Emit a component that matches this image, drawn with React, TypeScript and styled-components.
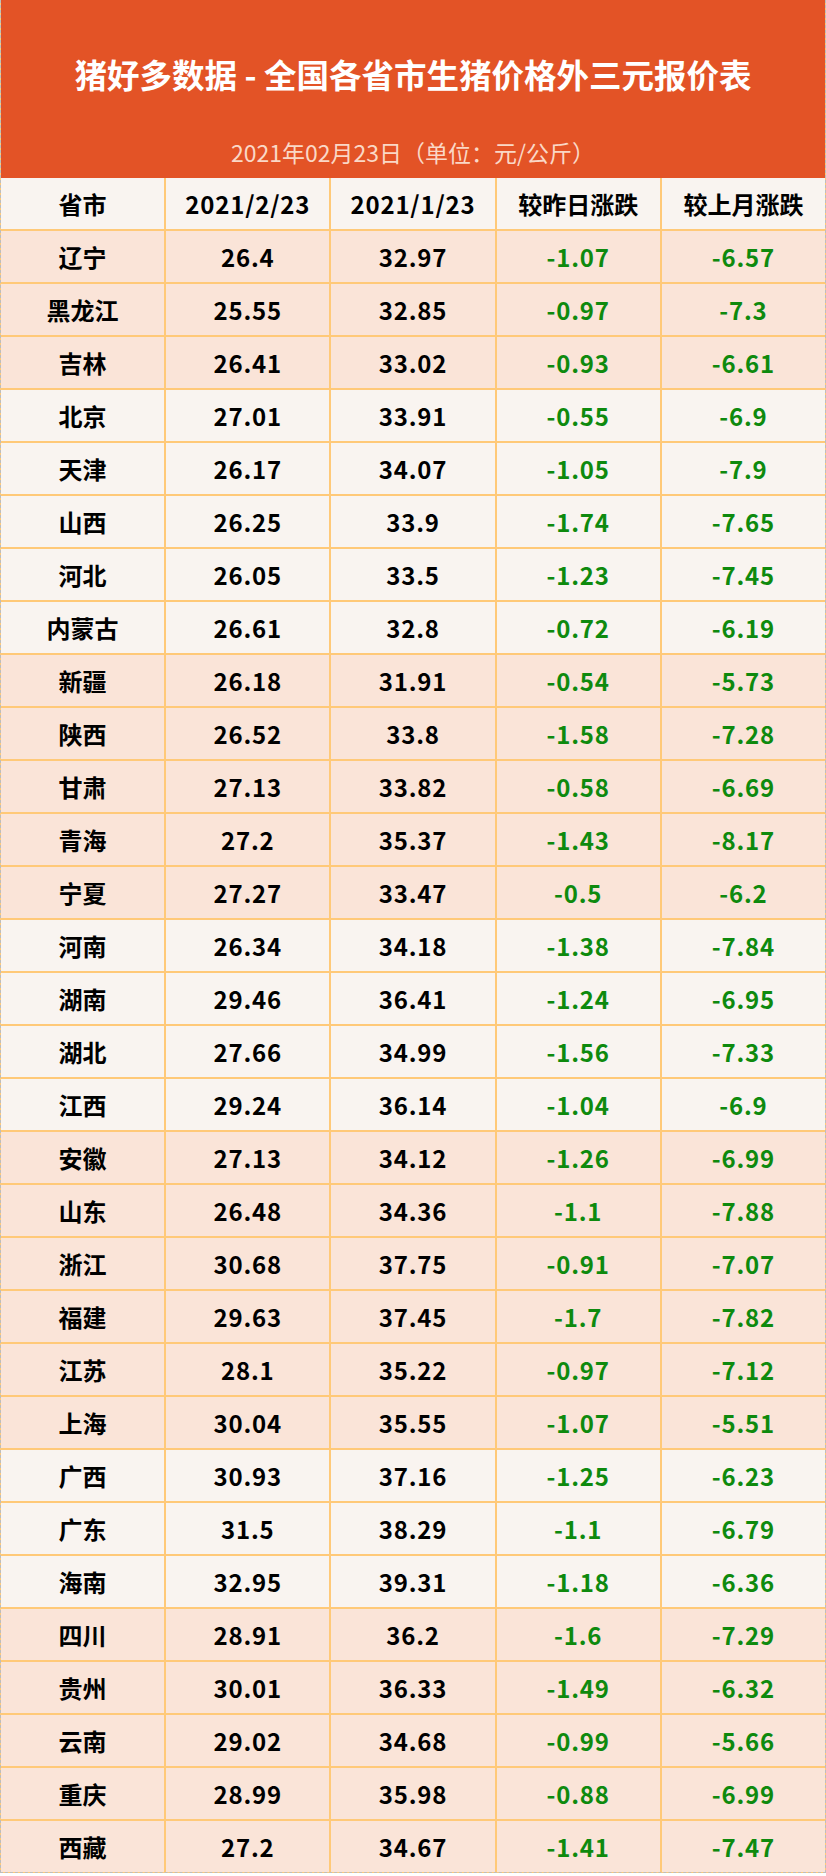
import React from "react";
import styled, { createGlobalStyle } from "styled-components";

const GlobalStyle = createGlobalStyle`
  html, body {
    margin: 0;
    padding: 0;
    background: #ffffff;
  }
  body {
    font-family: "Noto Sans CJK SC", "Noto Sans", sans-serif;
  }
`;

type Row = [string, string, string, string, string, boolean];

// name, 2021/2/23, 2021/1/23, day change, month change, pink row
const rows: Row[] = [
  ["辽宁", "26.4", "32.97", "-1.07", "-6.57", true],
  ["黑龙江", "25.55", "32.85", "-0.97", "-7.3", true],
  ["吉林", "26.41", "33.02", "-0.93", "-6.61", true],
  ["北京", "27.01", "33.91", "-0.55", "-6.9", false],
  ["天津", "26.17", "34.07", "-1.05", "-7.9", false],
  ["山西", "26.25", "33.9", "-1.74", "-7.65", false],
  ["河北", "26.05", "33.5", "-1.23", "-7.45", false],
  ["内蒙古", "26.61", "32.8", "-0.72", "-6.19", false],
  ["新疆", "26.18", "31.91", "-0.54", "-5.73", true],
  ["陕西", "26.52", "33.8", "-1.58", "-7.28", true],
  ["甘肃", "27.13", "33.82", "-0.58", "-6.69", true],
  ["青海", "27.2", "35.37", "-1.43", "-8.17", true],
  ["宁夏", "27.27", "33.47", "-0.5", "-6.2", true],
  ["河南", "26.34", "34.18", "-1.38", "-7.84", false],
  ["湖南", "29.46", "36.41", "-1.24", "-6.95", false],
  ["湖北", "27.66", "34.99", "-1.56", "-7.33", false],
  ["江西", "29.24", "36.14", "-1.04", "-6.9", false],
  ["安徽", "27.13", "34.12", "-1.26", "-6.99", true],
  ["山东", "26.48", "34.36", "-1.1", "-7.88", true],
  ["浙江", "30.68", "37.75", "-0.91", "-7.07", true],
  ["福建", "29.63", "37.45", "-1.7", "-7.82", true],
  ["江苏", "28.1", "35.22", "-0.97", "-7.12", true],
  ["上海", "30.04", "35.55", "-1.07", "-5.51", true],
  ["广西", "30.93", "37.16", "-1.25", "-6.23", false],
  ["广东", "31.5", "38.29", "-1.1", "-6.79", false],
  ["海南", "32.95", "39.31", "-1.18", "-6.36", false],
  ["四川", "28.91", "36.2", "-1.6", "-7.29", true],
  ["贵州", "30.01", "36.33", "-1.49", "-6.32", true],
  ["云南", "29.02", "34.68", "-0.99", "-5.66", true],
  ["重庆", "28.99", "35.98", "-0.88", "-6.99", true],
  ["西藏", "27.2", "34.67", "-1.41", "-7.47", true],
];

const Page = styled.div`
  width: 826px;
  box-sizing: border-box;
  border: 1px dashed #bdbdbd;
  border-top: none;
  background: #ffc978;
`;

const Banner = styled.header`
  height: 178px;
  background: #e35326;
  display: flex;
  flex-direction: column;
  align-items: center;
  padding-top: 55px;
  box-sizing: border-box;
`;

const Title = styled.h1`
  margin: 0;
  font-size: 32.5px;
  line-height: 38px;
  font-weight: 700;
  color: #ffffff;
`;

const Subtitle = styled.div`
  margin-top: 46px;
  font-size: 23px;
  line-height: 26px;
  font-weight: 400;
  color: #fad8c6;
`;

const Grid = styled.div`
  display: grid;
  grid-template-columns: repeat(5, 1fr);
  column-gap: 2px;
  row-gap: 2px;
`;

const Cell = styled.div<{ $pink?: boolean; $num?: boolean; $green?: boolean }>`
  height: 51px;
  display: flex;
  align-items: center;
  justify-content: center;
  background: ${(p) => (p.$pink ? "#fae4d8" : "#f9f4f0")};
  color: ${(p) => (p.$green ? "#0e8a0e" : "#000000")};
  font-size: 24px;
  font-weight: 700;
  letter-spacing: ${(p) => (p.$num ? "0.8px" : "0")};
`;

const App: React.FC = () => {
  return (
    <Page>
      <GlobalStyle />
      <Banner>
        <Title>猪好多数据 - 全国各省市生猪价格外三元报价表</Title>
        <Subtitle>2021年02月23日（单位：元/公斤）</Subtitle>
      </Banner>
      <Grid>
        <Cell>省市</Cell>
        <Cell $num>2021/2/23</Cell>
        <Cell $num>2021/1/23</Cell>
        <Cell>较昨日涨跌</Cell>
        <Cell>较上月涨跌</Cell>
        {rows.map(([name, now, last, day, month, pink]) => (
          <React.Fragment key={name}>
            <Cell $pink={pink}>{name}</Cell>
            <Cell $pink={pink} $num>
              {now}
            </Cell>
            <Cell $pink={pink} $num>
              {last}
            </Cell>
            <Cell $pink={pink} $num $green>
              {day}
            </Cell>
            <Cell $pink={pink} $num $green>
              {month}
            </Cell>
          </React.Fragment>
        ))}
      </Grid>
    </Page>
  );
};

export default App;
